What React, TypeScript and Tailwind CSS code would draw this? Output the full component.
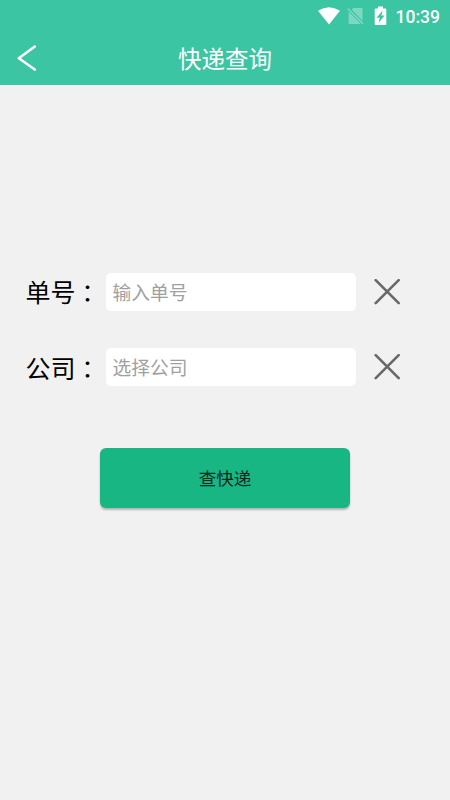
import { useState } from 'react';

interface FieldProps {
  label: string;
  placeholder: string;
  value: string;
  onChange: (value: string) => void;
}

function StatusBar() {
  return (
    <div className="flex h-8 items-center justify-end pr-[10px]">
      <svg className="h-[18px] w-[22px]" viewBox="0 0 22 18" fill="#fff">
        <path d="M11 17.4 0 3.8Q11-3.4 22 3.8Z" />
      </svg>
      <svg className="ml-[7px] h-[18px] w-[17px]" viewBox="0 0 17 18">
        <path d="M15.5 1v12.8L4.6 2.6 6.2 1zM1.6 4.6 13.8 17H1.6z" fill="#fff" fillOpacity="0.33" />
        <path d="M0.8 1.6 16 16.8" stroke="#fff" strokeOpacity="0.4" strokeWidth="1.3" />
      </svg>
      <svg className="ml-[10px] h-[20px] w-[13px]" viewBox="0 0 13 20">
        <path d="M4 0.5h5v2h2.3q1 0 1 1v14.5q0 1-1 1H1.7q-1 0-1-1V3.5q0-1 1-1H4z" fill="#fff" />
        <path d="M8.6 4.5 2.6 11.7h3.2L4.5 17 10.6 9.5H7.4z" fill="#3cc5a3" />
      </svg>
      <span className="ml-[9px] pt-[2px] font-[Roboto,sans-serif] text-[17.5px] leading-[30px] font-medium text-white">
        10:39
      </span>
    </div>
  );
}

function Field({ label, placeholder, value, onChange }: FieldProps) {
  return (
    <div className="flex h-[38px] items-center pl-[25.5px]">
      <label className="flex w-[80.5px] items-start pt-[3px] text-[25px] leading-[38px] whitespace-nowrap text-black">
        {label}
        <span className="ml-[6px] w-[19px] text-[24px]">：</span>
      </label>
      <input
        value={value}
        placeholder={placeholder}
        onChange={(e) => onChange(e.target.value)}
        className="h-[38px] w-[250px] rounded-[5px] bg-white px-[6.5px] pt-[4px] text-[18.75px] text-black outline-none placeholder:text-[#a0a0a0]"
      />
      <button className="ml-[18px]" onClick={() => onChange('')}>
        <svg className="size-[26px]" viewBox="0 0 26 26" fill="none" stroke="#686868" strokeWidth="2.6" strokeLinecap="round">
          <path d="M1.7 1.2 24.7 24.2M24.7 1.2 1.7 24.2" />
        </svg>
      </button>
    </div>
  );
}

export default function App() {
  const [number, setNumber] = useState('');
  const [company, setCompany] = useState('');

  return (
    <div
      lang="zh-CN"
      className="flex h-screen flex-col bg-[#f1f1f1] font-['Liberation_Sans','Noto_Sans_CJK_SC',sans-serif]"
    >
      <header className="h-[85px] bg-[#3cc5a3]">
        <StatusBar />
        <div className="grid h-[53px] grid-cols-[60px_1fr_60px] items-center">
          <button className="pl-[17px]">
            <svg className="h-[28px] w-[20px]" viewBox="0 0 20 28" fill="none" stroke="#fff" strokeWidth="2.5" strokeLinecap="round" strokeLinejoin="round">
              <path d="M17.8 1.6 1.8 13.2 17.8 24.5" />
            </svg>
          </button>
          <h1 className="pt-[4px] text-center text-[23.5px] text-white">快递查询</h1>
        </div>
      </header>

      <main className="flex flex-col pt-[187.5px]">
        <div className="flex flex-col gap-[37.5px]">
          <Field label="单号" placeholder="输入单号" value={number} onChange={setNumber} />
          <Field label="公司" placeholder="选择公司" value={company} onChange={setCompany} />
        </div>
        <button className="mt-[62px] h-[60px] w-[250px] self-center rounded-[6px] bg-[#17b683] pt-[3px] text-[17.5px] text-[#08271d] shadow-[0_2px_2px_rgba(0,0,0,0.25)]">
          查快递
        </button>
      </main>
    </div>
  );
}
